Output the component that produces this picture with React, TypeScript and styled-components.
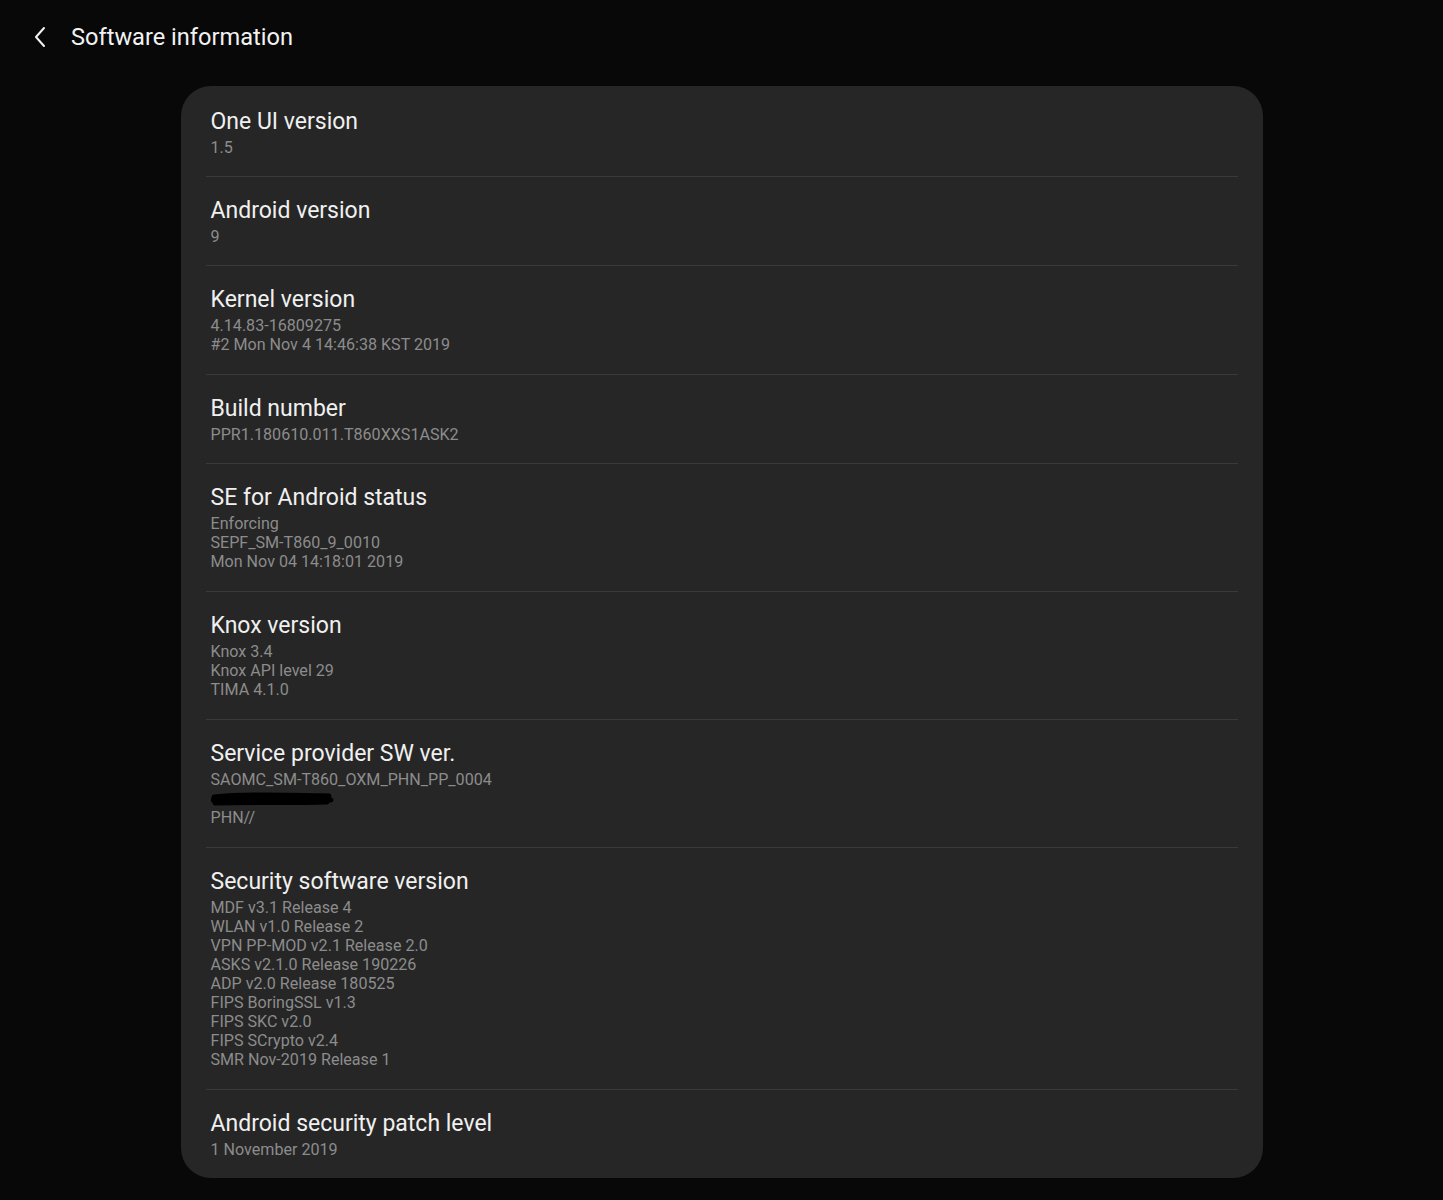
import React from "react";
import styled, { createGlobalStyle } from "styled-components";

const Global = createGlobalStyle`
  html, body { margin: 0; padding: 0; background: #080808; }
  body { font-family: Roboto, "Noto Sans", "Liberation Sans", sans-serif; -webkit-font-smoothing: antialiased; }
`;

const Page = styled.div`
  min-height: 1200px;
  background: #080808;
  display: flex;
  flex-direction: column;
`;

const Header = styled.header`
  height: 74px;
  display: flex;
  align-items: center;
  padding-left: 30px;
  gap: 21px;
  color: #f2f2f2;
`;

const BackButton = styled.button`
  background: none;
  border: none;
  padding: 0;
  width: 20px;
  height: 24px;
  display: flex;
  align-items: center;
  justify-content: center;
  color: #f2f2f2;
  cursor: pointer;
`;

const Title = styled.h1`
  margin: 0;
  font-size: 23.6px;
  font-weight: 400;
`;

const Card = styled.section`
  width: 1082px;
  margin: 12px auto 0;
  background: #262626;
  border-radius: 30px;
  padding: 2px 0 0;
  box-sizing: border-box;
`;

const Row = styled.div<{ $multi?: boolean }>`
  margin: 0 25px;
  padding: 19px 5px ${(p) => (p.$multi ? 19.6 : 19)}px;
  border-bottom: 1px solid #3a3a3a;
  &:last-child { border-bottom: none; }
`;

const RowTitle = styled.div`
  font-size: 23px;
  line-height: 30px;
  color: #f0f0f0;
`;

const SubLines = styled.div`
  margin-top: 1px;
  font-size: 16.1px;
  line-height: 19.1px;
  color: #8c8c8c;
`;

const Line = styled.div`
  height: 19.1px;
  white-space: nowrap;
`;

const Redacted = styled.svg`
  display: block;
  width: 124px;
  height: 19px;
`;

type Item = { title: string; lines: (string | null)[] };

const items: Item[] = [
  { title: "One UI version", lines: ["1.5"] },
  { title: "Android version", lines: ["9"] },
  { title: "Kernel version", lines: ["4.14.83-16809275", "#2 Mon Nov 4 14:46:38 KST 2019"] },
  { title: "Build number", lines: ["PPR1.180610.011.T860XXS1ASK2"] },
  { title: "SE for Android status", lines: ["Enforcing", "SEPF_SM-T860_9_0010", "Mon Nov 04 14:18:01 2019"] },
  { title: "Knox version", lines: ["Knox 3.4", "Knox API level 29", "TIMA 4.1.0"] },
  { title: "Service provider SW ver.", lines: ["SAOMC_SM-T860_OXM_PHN_PP_0004", null, "PHN//"] },
  {
    title: "Security software version",
    lines: [
      "MDF v3.1 Release 4",
      "WLAN v1.0 Release 2",
      "VPN PP-MOD v2.1 Release 2.0",
      "ASKS v2.1.0 Release 190226",
      "ADP v2.0 Release 180525",
      "FIPS BoringSSL v1.3",
      "FIPS SKC v2.0",
      "FIPS SCrypto v2.4",
      "SMR Nov-2019 Release 1",
    ],
  },
  { title: "Android security patch level", lines: ["1 November 2019"] },
];

export default function App() {
  return (
    <Page>
      <Global />
      <Header>
        <BackButton aria-label="Back">
          <svg width="14" height="22" viewBox="0 0 14 22" fill="none">
            <path d="M11 2 L3 11 L11 20" stroke="#f2f2f2" strokeWidth="2" strokeLinecap="round" strokeLinejoin="round" />
          </svg>
        </BackButton>
        <Title>Software information</Title>
      </Header>
      <Card>
        {items.map((it) => (
          <Row key={it.title} $multi={it.lines.length > 1}>
            <RowTitle>{it.title}</RowTitle>
            <SubLines>
              {it.lines.map((l, i) =>
                l === null ? (
                  <Redacted key={i} viewBox="0 0 124 19">
                    <path
                      d="M3 8 C30 5 70 6 118 7 M2 11 C40 9 80 10 120 11 M4 14 C40 13 80 14 116 13"
                      stroke="#000"
                      strokeWidth="5"
                      strokeLinecap="round"
                      fill="none"
                    />
                  </Redacted>
                ) : (
                  <Line key={i}>{l}</Line>
                )
              )}
            </SubLines>
          </Row>
        ))}
      </Card>
    </Page>
  );
}
